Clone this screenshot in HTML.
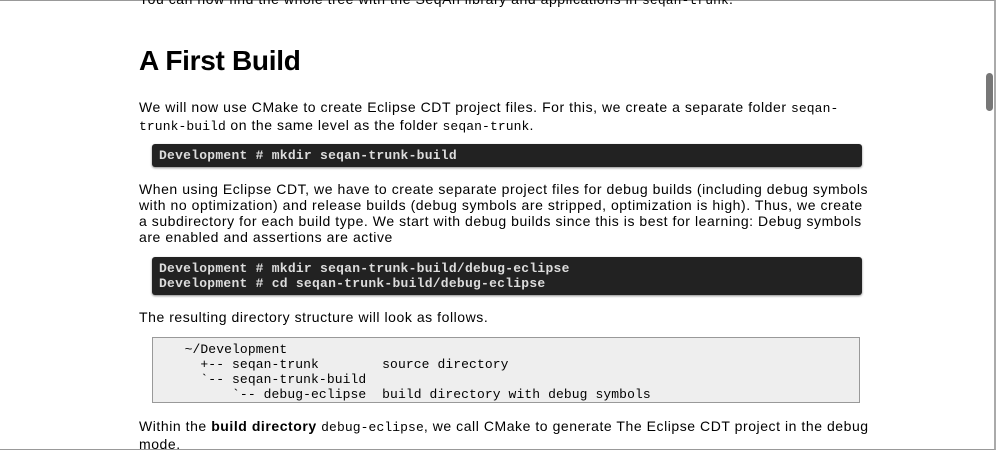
<!DOCTYPE html>
<html><head><style>
html,body{margin:0;padding:0}
body{width:996px;height:450px;overflow:hidden;background:#fff;position:relative;font-family:"Liberation Sans",sans-serif;color:#000}
.frame{position:absolute;left:0;top:0;width:994px;height:448px;border-top:1px solid #999;border-right:2px solid #aaa;border-bottom:1px solid #999}
.t{position:absolute;left:139px;font-size:14px;letter-spacing:0.55px;line-height:16px;width:760px;white-space:nowrap}
code{font-family:"Liberation Mono",monospace;font-size:13px;letter-spacing:0.1px}
h1{position:absolute;left:139px;top:45px;margin:0;font-size:28px;font-weight:bold;letter-spacing:-0.3px}
.dark{position:absolute;left:152px;width:696px;background:#222;border-radius:3px;color:#ddd;font-family:"Liberation Mono",monospace;font-weight:bold;font-size:13px;letter-spacing:0.25px;line-height:15px;padding:4px 7px;white-space:pre;box-shadow:0 1px 2px #888}
.pre{position:absolute;left:152px;top:337px;width:708px;height:66px;background:#eee;border:1px solid #999;font-family:"Liberation Mono",monospace;font-size:13px;line-height:15px;white-space:pre;padding:4px 0 0 0;box-sizing:border-box;letter-spacing:0.1px}
.sb{position:absolute;left:986px;top:73px;width:7px;height:38px;background:#777;border-radius:4px}
</style></head><body>
<div class="frame"></div>
<div class="t" style="top:-9px">You can now find the whole tree with the SeqAn library and applications in <code>seqan-trunk</code>.</div>
<h1>A First Build</h1>
<div class="t" style="top:99px">We will now use CMake to create Eclipse CDT project files. For this, we create a separate folder <code>seqan-</code><br><code>trunk-build</code> on the same level as the folder <code>seqan-trunk</code>.</div>
<div class="dark" style="top:144px;height:15px">Development # mkdir seqan-trunk-build</div>
<div class="t" style="top:181px">When using Eclipse CDT, we have to create separate project files for debug builds (including debug symbols<br>with no optimization) and release builds (debug symbols are stripped, optimization is high). Thus, we create<br>a subdirectory for each build type. We start with debug builds since this is best for learning: Debug symbols<br>are enabled and assertions are active</div>
<div class="dark" style="top:257px;height:30px">Development # mkdir seqan-trunk-build/debug-eclipse
Development # cd seqan-trunk-build/debug-eclipse</div>
<div class="t" style="top:309px">The resulting directory structure will look as follows.</div>
<div class="pre">    ~/Development
      +-- seqan-trunk        source directory
      `-- seqan-trunk-build
          `-- debug-eclipse  build directory with debug symbols</div>
<div class="t" style="top:418px">Within the <b>build directory</b> <code>debug-eclipse</code>, we call CMake to generate The Eclipse CDT project in the debug<br>mode.</div>
<div class="sb"></div>
</body></html>
